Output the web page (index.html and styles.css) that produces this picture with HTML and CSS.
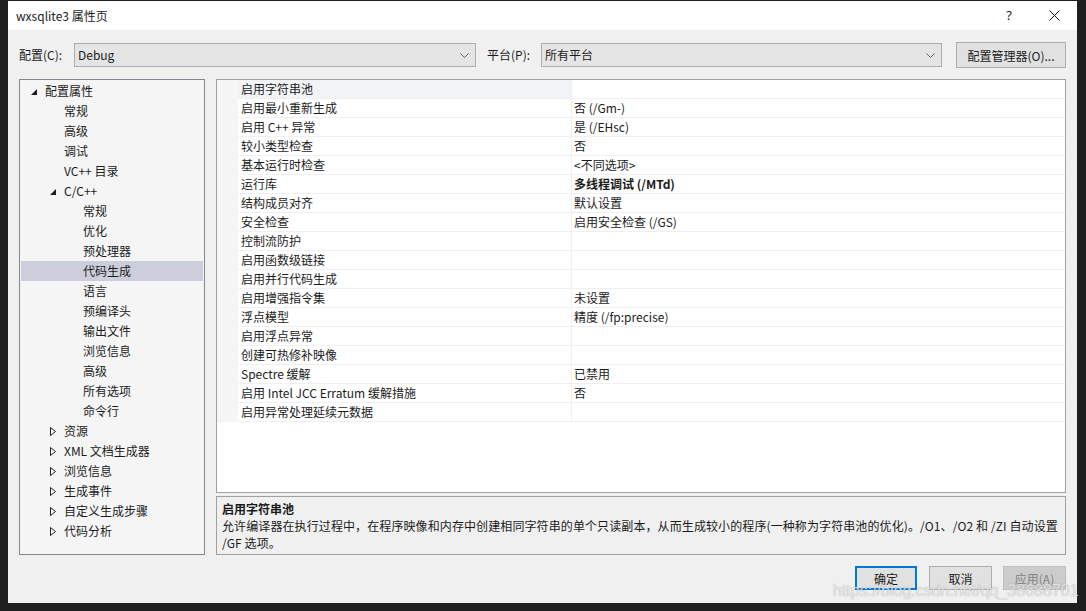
FILE: index.html
```html
<!DOCTYPE html>
<html lang="zh-CN">
<head>
<meta charset="utf-8">
<title>wxsqlite3 属性页</title>
<link rel="stylesheet" href="styles.css">
</head>
<body>
<div class="dialog">
  <div class="titlebar">
    <span class="title">wxsqlite3 属性页</span>
    <span class="tb-btn help">?</span>
    <span class="tb-btn close">
      <svg width="11" height="11" viewBox="0 0 11 11"><path d="M0.5 0.5 L10.5 10.5 M10.5 0.5 L0.5 10.5" stroke="#111" stroke-width="1" fill="none"/></svg>
    </span>
  </div>

  <div class="config-row">
    <span class="label cfg-label">配置(C):</span>
    <div class="combo combo-cfg"><span>Debug</span>
      <svg class="chev" width="9" height="5" viewBox="0 0 9 5"><path d="M0.5 0.5 L4.5 4.5 L8.5 0.5" stroke="#606060" fill="none"/></svg>
    </div>
    <span class="label plat-label">平台(P):</span>
    <div class="combo combo-plat"><span>所有平台</span>
      <svg class="chev" width="9" height="5" viewBox="0 0 9 5"><path d="M0.5 0.5 L4.5 4.5 L8.5 0.5" stroke="#606060" fill="none"/></svg>
    </div>
    <button class="btn mgr-btn">配置管理器(O)...</button>
  </div>

  <div class="main">
    <div class="tree">
      <div class="node l0"><span class="arrow"><svg width="6" height="6" viewBox="0 0 6 6"><polygon points="6,0 6,6 0,6" fill="#1e1e1e"/></svg></span>配置属性</div>
      <div class="node l1"><span class="arrow"></span>常规</div>
      <div class="node l1"><span class="arrow"></span>高级</div>
      <div class="node l1"><span class="arrow"></span>调试</div>
      <div class="node l1"><span class="arrow"></span>VC++ 目录</div>
      <div class="node l1"><span class="arrow"><svg width="6" height="6" viewBox="0 0 6 6"><polygon points="6,0 6,6 0,6" fill="#1e1e1e"/></svg></span>C/C++</div>
      <div class="node l2"><span class="arrow"></span>常规</div>
      <div class="node l2"><span class="arrow"></span>优化</div>
      <div class="node l2"><span class="arrow"></span>预处理器</div>
      <div class="node l2 selected"><span class="arrow"></span>代码生成</div>
      <div class="node l2"><span class="arrow"></span>语言</div>
      <div class="node l2"><span class="arrow"></span>预编译头</div>
      <div class="node l2"><span class="arrow"></span>输出文件</div>
      <div class="node l2"><span class="arrow"></span>浏览信息</div>
      <div class="node l2"><span class="arrow"></span>高级</div>
      <div class="node l2"><span class="arrow"></span>所有选项</div>
      <div class="node l2"><span class="arrow"></span>命令行</div>
      <div class="node l1"><span class="arrow"><svg class="closed" width="6" height="9" viewBox="0 0 6 9"><polygon points="0.5,0.5 5.5,4.5 0.5,8.5" fill="none" stroke="#1e1e1e"/></svg></span>资源</div>
      <div class="node l1"><span class="arrow"><svg class="closed" width="6" height="9" viewBox="0 0 6 9"><polygon points="0.5,0.5 5.5,4.5 0.5,8.5" fill="none" stroke="#1e1e1e"/></svg></span>XML 文档生成器</div>
      <div class="node l1"><span class="arrow"><svg class="closed" width="6" height="9" viewBox="0 0 6 9"><polygon points="0.5,0.5 5.5,4.5 0.5,8.5" fill="none" stroke="#1e1e1e"/></svg></span>浏览信息</div>
      <div class="node l1"><span class="arrow"><svg class="closed" width="6" height="9" viewBox="0 0 6 9"><polygon points="0.5,0.5 5.5,4.5 0.5,8.5" fill="none" stroke="#1e1e1e"/></svg></span>生成事件</div>
      <div class="node l1"><span class="arrow"><svg class="closed" width="6" height="9" viewBox="0 0 6 9"><polygon points="0.5,0.5 5.5,4.5 0.5,8.5" fill="none" stroke="#1e1e1e"/></svg></span>自定义生成步骤</div>
      <div class="node l1"><span class="arrow"><svg class="closed" width="6" height="9" viewBox="0 0 6 9"><polygon points="0.5,0.5 5.5,4.5 0.5,8.5" fill="none" stroke="#1e1e1e"/></svg></span>代码分析</div>
    </div>

    <div class="right">
      <div class="grid">
        <div class="prow current"><span class="gutter"></span><span class="pname">启用字符串池</span><span class="pval"></span></div>
        <div class="prow"><span class="gutter"></span><span class="pname">启用最小重新生成</span><span class="pval">否 (/Gm-)</span></div>
        <div class="prow"><span class="gutter"></span><span class="pname">启用 C++ 异常</span><span class="pval">是 (/EHsc)</span></div>
        <div class="prow"><span class="gutter"></span><span class="pname">较小类型检查</span><span class="pval">否</span></div>
        <div class="prow"><span class="gutter"></span><span class="pname">基本运行时检查</span><span class="pval">&lt;不同选项&gt;</span></div>
        <div class="prow"><span class="gutter"></span><span class="pname">运行库</span><span class="pval strong">多线程调试 (/MTd)</span></div>
        <div class="prow"><span class="gutter"></span><span class="pname">结构成员对齐</span><span class="pval">默认设置</span></div>
        <div class="prow"><span class="gutter"></span><span class="pname">安全检查</span><span class="pval">启用安全检查 (/GS)</span></div>
        <div class="prow"><span class="gutter"></span><span class="pname">控制流防护</span><span class="pval"></span></div>
        <div class="prow"><span class="gutter"></span><span class="pname">启用函数级链接</span><span class="pval"></span></div>
        <div class="prow"><span class="gutter"></span><span class="pname">启用并行代码生成</span><span class="pval"></span></div>
        <div class="prow"><span class="gutter"></span><span class="pname">启用增强指令集</span><span class="pval">未设置</span></div>
        <div class="prow"><span class="gutter"></span><span class="pname">浮点模型</span><span class="pval">精度 (/fp:precise)</span></div>
        <div class="prow"><span class="gutter"></span><span class="pname">启用浮点异常</span><span class="pval"></span></div>
        <div class="prow"><span class="gutter"></span><span class="pname">创建可热修补映像</span><span class="pval"></span></div>
        <div class="prow"><span class="gutter"></span><span class="pname">Spectre 缓解</span><span class="pval">已禁用</span></div>
        <div class="prow"><span class="gutter"></span><span class="pname">启用 Intel JCC Erratum 缓解措施</span><span class="pval">否</span></div>
        <div class="prow"><span class="gutter"></span><span class="pname">启用异常处理延续元数据</span><span class="pval"></span></div>
      </div>
      <div class="desc">
        <div class="desc-title">启用字符串池</div>
        <div class="desc-line">允许编译器在执行过程中，在程序映像和内存中创建相同字符串的单个只读副本，从而生成较小的程序(一种称为字符串池的优化)。/O1、/O2 和 /ZI 自动设置</div>
        <div class="desc-line">/GF 选项。</div>
      </div>
    </div>
  </div>

  <div class="footer">
    <button class="btn ok">确定</button>
    <button class="btn cancel">取消</button>
    <button class="btn apply" disabled>应用(A)</button>
  </div>
</div>
<div class="watermark">https://blog.csdn.net/qq_38688701</div>
</body>
</html>
```

FILE: styles.css
```css
html, body {
  margin: 0;
  padding: 0;
}

body {
  background: #1e1e1e;
  width: 1086px;
  height: 611px;
  overflow: hidden;
  position: relative;
  font-family: "Noto Sans CJK SC", "Noto Sans", sans-serif;
  font-size: 12px;
  color: #1b1b1b;
}

.dialog {
  margin: 1px 0 0 8px;
  width: 1069px;
  height: 602px;
  background: #f0f0f0;
  display: flex;
  flex-direction: column;
  box-sizing: border-box;
}

/* window caption */
.titlebar {
  height: 29px;
  background: #ffffff;
  display: flex;
  align-items: center;
  padding-left: 8px;
  flex: none;
}

.title {
  flex: 1;
  font-size: 12px;
  line-height: 29px;
  margin-top: -1px;
}

.tb-btn {
  width: 46px;
  height: 29px;
  display: flex;
  align-items: center;
  justify-content: center;
}

.help {
  font-family: "Noto Sans", sans-serif;
  font-size: 13px;
  color: #222;
  margin-top: -1px;
}

.close {
  width: 45px;
  margin-top: -1px;
}

/* configuration selector row */
.config-row {
  display: flex;
  align-items: center;
  margin-top: 12px;
  height: 26px;
  padding: 0 11px;
  flex: none;
}

.label {
  line-height: 24px;
  white-space: nowrap;
}

.cfg-label {
  width: 55px;
}

.plat-label {
  width: 54px;
  margin-left: 11px;
}

.combo {
  height: 24px;
  box-sizing: border-box;
  border: 1px solid #adadad;
  background: #e5e5e5;
  display: flex;
  align-items: center;
  padding-left: 3px;
  padding-right: 5px;
}

.combo span {
  flex: 1;
  line-height: 22px;
}

.combo-cfg {
  width: 402px;
}

.combo-plat {
  width: 401px;
}

.chev {
  display: block;
  margin-right: 1px;
}

.btn {
  font-family: "Noto Sans CJK SC", "Noto Sans", sans-serif;
  font-size: 12px;
  color: #1b1b1b;
  background: #e1e1e1;
  border: 1px solid #adadad;
  box-sizing: border-box;
  padding: 0;
  margin: 0;
}

.mgr-btn {
  width: 110px;
  height: 26px;
  margin-left: 14px;
}

/* tree + property grid */
.main {
  display: flex;
  gap: 11px;
  margin-top: 11px;
  height: 476px;
  padding: 0 11px;
  flex: none;
}

.tree {
  width: 186px;
  box-sizing: border-box;
  border: 1px solid #828790;
  background: #f5f5f5;
  padding: 1px;
}

.node {
  height: 20px;
  line-height: 20px;
  display: flex;
  align-items: center;
  white-space: nowrap;
}

.node.l0 { padding-left: 5px; }
.node.l1 { padding-left: 24px; }
.node.l2 { padding-left: 43px; }

.node.selected {
  background: #cccedb;
}

.arrow {
  width: 19px;
  height: 20px;
  flex: none;
  display: flex;
  align-items: center;
  padding-left: 5px;
  box-sizing: border-box;
}

.arrow svg {
  display: block;
  margin-top: 2px;
}

.arrow svg.closed {
  margin-top: 1px;
}

.right {
  flex: 1;
  display: flex;
  flex-direction: column;
  gap: 3px;
}

.grid {
  height: 414px;
  box-sizing: border-box;
  border: 1px solid #a0a0a0;
  background: #ffffff;
  display: flex;
  flex-direction: column;
}

.prow {
  display: flex;
  height: 19px;
  flex: none;
}

.gutter {
  width: 21px;
  background: #f5f5f5;
  flex: none;
}

.pname {
  width: 334px;
  flex: none;
  box-sizing: border-box;
  padding-left: 3px;
  border-bottom: 1px solid #f0f0f0;
  border-right: 1px solid #eef0f3;
  line-height: 18px;
  white-space: nowrap;
}

.pval {
  flex: 1;
  box-sizing: border-box;
  padding-left: 2px;
  border-bottom: 1px solid #f0f0f0;
  line-height: 18px;
  white-space: nowrap;
}

.pval.strong {
  font-weight: bold;
}

.prow.current .pname {
  background: #f1f3f7;
}

.desc {
  height: 59px;
  box-sizing: border-box;
  border: 1px solid #a0a0a0;
  background: #f0f0f0;
  padding: 3px 5px 0;
}

.desc-title {
  font-weight: bold;
  line-height: 17px;
}

.desc-line {
  line-height: 17px;
  white-space: nowrap;
  letter-spacing: 0.1px;
}

/* dialog buttons */
.footer {
  display: flex;
  justify-content: flex-end;
  margin-top: 11px;
  padding-right: 11px;
  flex: none;
}

.footer .btn {
  height: 24px;
  width: 63px;
}

.footer .ok {
  width: 62px;
  border: 2px solid #0078d7;
}

.footer .cancel {
  margin-left: 12px;
}

.footer .apply {
  margin-left: 11px;
  background: #cccccc;
  border-color: #bfbfbf;
  color: #838383;
}

.watermark {
  position: absolute;
  left: 833px;
  top: 582px;
  font-family: "Liberation Sans", Arial, sans-serif;
  font-size: 16px;
  color: rgba(255, 255, 255, 0.72);
  text-shadow: 0 0 1px rgba(80, 80, 80, 0.55);
  white-space: nowrap;
  pointer-events: none;
}
```
